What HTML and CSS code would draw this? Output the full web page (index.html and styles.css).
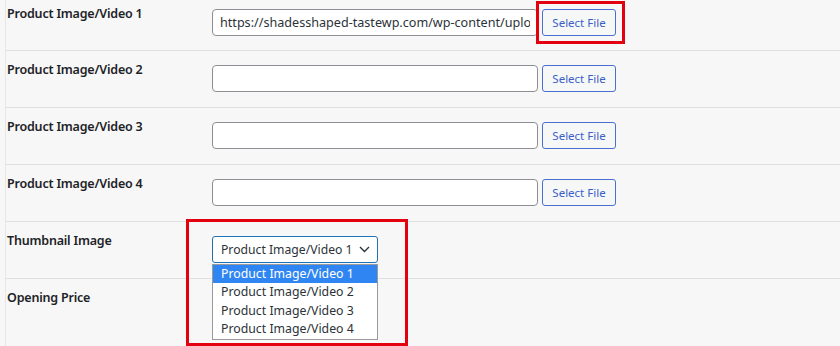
FILE: index.html
```html
<!DOCTYPE html>
<html lang="en">
<head>
  <meta charset="UTF-8">
  <title>Product Media Settings</title>
  <link rel="stylesheet" href="styles.css">
</head>
<body>

  <!-- Settings table -->
  <div class="form-table">
    <div class="row first">
      <div class="label">Product Image/Video 1</div>
      <div class="field">
        <input class="url-input" type="text" value="https://shadesshaped-tastewp.com/wp-content/uploads/2023/05/product.mp4">
        <button class="select-btn">Select File</button>
      </div>
    </div>
    <div class="row">
      <div class="label">Product Image/Video 2</div>
      <div class="field">
        <input class="url-input" type="text">
        <button class="select-btn">Select File</button>
      </div>
    </div>
    <div class="row">
      <div class="label">Product Image/Video 3</div>
      <div class="field">
        <input class="url-input" type="text">
        <button class="select-btn">Select File</button>
      </div>
    </div>
    <div class="row">
      <div class="label">Product Image/Video 4</div>
      <div class="field">
        <input class="url-input" type="text">
        <button class="select-btn">Select File</button>
      </div>
    </div>
    <div class="row">
      <div class="label">Thumbnail Image</div>
      <div class="field">
        <div class="select-wrap">
          <div class="select-box">
            <span>Product Image/Video 1</span>
            <svg class="chevron" width="11" height="7" viewBox="0 0 11 7"><path d="M1 1 L5.5 5.5 L10 1" fill="none" stroke="#2c3338" stroke-width="1.4"/></svg>
          </div>
          <!-- open dropdown list -->
          <ul class="options">
            <li class="selected">Product Image/Video 1</li>
            <li>Product Image/Video 2</li>
            <li>Product Image/Video 3</li>
            <li>Product Image/Video 4</li>
          </ul>
        </div>
      </div>
    </div>
    <div class="row last">
      <div class="label">Opening Price</div>
      <div class="field"></div>
    </div>
  </div>

  <!-- Red highlight boxes -->
  <div class="highlight hl-file"></div>
  <div class="highlight hl-thumb"></div>

</body>
</html>
```

FILE: styles.css
```css
/* Global */
body {
  margin: 0;
  padding: 0;
  background-color: #f7f7f7;
  font-family: 'Noto Sans', 'Open Sans', sans-serif;
  color: #1d2327;
  height: 346px;
  overflow: hidden;
  position: relative;
}

/* Table */
.form-table {
  margin-left: 5px;
  border-left: 1px solid #e6e6e6;
}

.row {
  display: flex;
  padding: 14px 0 15px;
  border-bottom: 1px solid #e0e0e0;
}

.row.first {
  padding-top: 9px;
  padding-bottom: 14px;
}

.row.last {
  border-bottom: none;
  padding-bottom: 0;
  height: 54px;
}

.label {
  width: 205px;
  flex-shrink: 0;
  margin-top: -2px;
  padding-left: 1px;
  font-size: 12.5px;
  font-weight: 600;
  letter-spacing: -0.2px;
  line-height: 14px;
}

.field {
  display: flex;
  align-items: center;
  gap: 4px;
  min-height: 27px;
}

/* Inputs */
.url-input {
  box-sizing: border-box;
  width: 326px;
  height: 27px;
  margin: 0;
  padding: 0 7px;
  border: 1px solid #8c8f94;
  border-radius: 4px;
  background: #fff;
  font-family: inherit;
  font-size: 12.6px;
  color: #2c3338;
}

.select-btn {
  box-sizing: border-box;
  height: 27px;
  width: 74px;
  margin: 0;
  padding: 0;
  border: 1px solid #4a6fd0;
  border-radius: 3px;
  background: #f6f7f7;
  color: #3a5fc8;
  font-family: inherit;
  font-size: 11.5px;
  cursor: pointer;
}

/* Select + open list */
.select-wrap {
  position: relative;
  margin-top: -1px;
}

.select-box {
  box-sizing: border-box;
  width: 166px;
  height: 27px;
  display: flex;
  align-items: center;
  justify-content: space-between;
  padding: 0 7px 0 8px;
  border: 1px solid #2271b1;
  border-radius: 3px;
  background: #fff;
  font-size: 12.2px;
  white-space: nowrap;
  color: #2c3338;
}

.chevron {
  margin-top: 1px;
}

.options {
  position: absolute;
  top: 28px;
  left: 0;
  box-sizing: border-box;
  width: 166px;
  margin: 0;
  padding: 0;
  list-style: none;
  background: #fff;
  border: 1px solid #9a9a9a;
}

.options li {
  height: 18.5px;
  line-height: 18.5px;
  padding-left: 8px;
  font-size: 12.3px;
  white-space: nowrap;
  color: #2c3338;
}

.options li.selected {
  background: #2f86f2;
  color: #fff;
}

/* Highlights */
.highlight {
  position: absolute;
  box-sizing: border-box;
  border: 3px solid #e3000f;
}

.hl-file {
  left: 536px;
  top: 1px;
  width: 89px;
  height: 43px;
}

.hl-thumb {
  left: 186px;
  top: 219px;
  width: 222px;
  height: 127px;
}
```
